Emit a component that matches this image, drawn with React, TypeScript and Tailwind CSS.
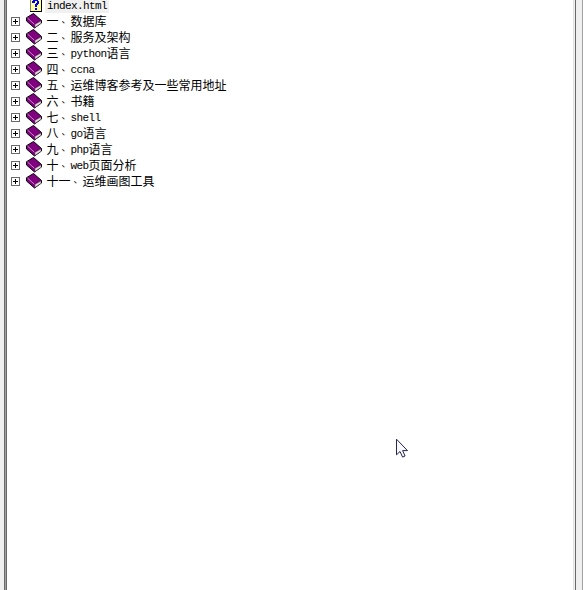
const rows: [string, string, string][] = [
  ['一', '', '数据库'],
  ['二', '', '服务及架构'],
  ['三', 'python', '语言'],
  ['四', 'ccna', ''],
  ['五', '', '运维博客参考及一些常用地址'],
  ['六', '', '书籍'],
  ['七', 'shell', ''],
  ['八', 'go', '语言'],
  ['九', 'php', '语言'],
  ['十', 'web', '页面分析'],
  ['十一', '', '运维画图工具'],
];

const Book = () => (
  <svg width="17" height="16" viewBox="0 0 17 16" className="shrink-0">
    <path d="M7.5 .5L15.5 7.5V10L8.5 15 .5 8V4.7z" fill="#800080" stroke="#000" strokeLinejoin="round" />
    <path d="M9 11.6l6-3.6v2.2L9 14.3z" fill="#e8e8e0" stroke="#444" strokeWidth=".4" />
    <path d="M1.5 5l6.8 6.2" stroke="#e0c8e0" strokeWidth=".7" fill="none" />
  </svg>
);

const Plus = () => (
  <svg width="9" height="9" className="shrink-0" shapeRendering="crispEdges">
    <path d="M.5.5h8v8h-8z" fill="#fff" stroke="#696969" />
    <path d="M2 4h5v1H2zM4 2h1v5H4z" />
  </svg>
);

const latinFont = "font-['Liberation_Mono',monospace] text-[11px] tracking-[-0.6px]";

export default function App() {
  return (
    <div className="relative flex h-[590px] w-[583px] overflow-hidden bg-white text-[12px] text-black">
      <div className="w-1 bg-[#f0f0f0]" />
      <div className="w-px bg-[#696969]" />
      <div className="w-px bg-[#a0a0a0]" />
      <div className="w-px bg-[#696969]" />
      <div className="flex-1">
        <div className="flex h-[13px] items-start pl-[23px]">
          <svg width="12" height="13" viewBox="0 0 12 13" shapeRendering="crispEdges">
            <path d="M0 0h12v12H0z" fill="#808080" />
            <path d="M1 0h10v11H1z" fill="#ffff90" />
            <path d="M11 0h1v12H0v-1h11z" fill="#000" />
            <path d="M3 0h5v1h1v3H8v1H7v2H5V4h1V3h1V1H5v2H2V1h1zM5 8h2v2H5z" fill="#0000ff" />
          </svg>
          <div className={`ml-[3px] h-[13px] w-[64px] bg-[#f0f0f0] pl-0.5 leading-[12px] ${latinFont}`}>
            index.html
          </div>
        </div>
        {rows.map(([number, latin, cjk]) => (
          <div key={number} className="flex h-4 items-center pl-1">
            <Plus />
            <div className="ml-[6px] flex"><Book /></div>
            <div className="ml-[3.5px] flex h-4 whitespace-nowrap font-['Noto_Sans_CJK_SC',sans-serif] leading-4">
              <span>{number}</span>
              <span className="-mt-px w-3 pl-[3px] text-[9px]">、</span>
              {latin && <span className={`leading-[18px] ${latinFont}`}>{latin}</span>}
              {cjk && <span>{cjk}</span>}
            </div>
          </div>
        ))}
      </div>
      <div className="w-px bg-[#e3e3e3]" />
      <div className="w-px bg-[#f0f0f0]" />
      <div className="w-px bg-[#696969]" />
      <div className="w-1.5 bg-[#f0f0f0]" />
      <div className="w-px bg-[#a0a0a0]" />
      <svg className="absolute left-[396px] top-[438px]" width="13" height="20" viewBox="0 0 13 20">
        <path d="M.5 1.2v15.6l3.5-3.3 2.6 5.6 2.5-1.1-2.5-5.4h4.9z" fill="#f8f8ff" stroke="#26264a" />
      </svg>
    </div>
  );
}
